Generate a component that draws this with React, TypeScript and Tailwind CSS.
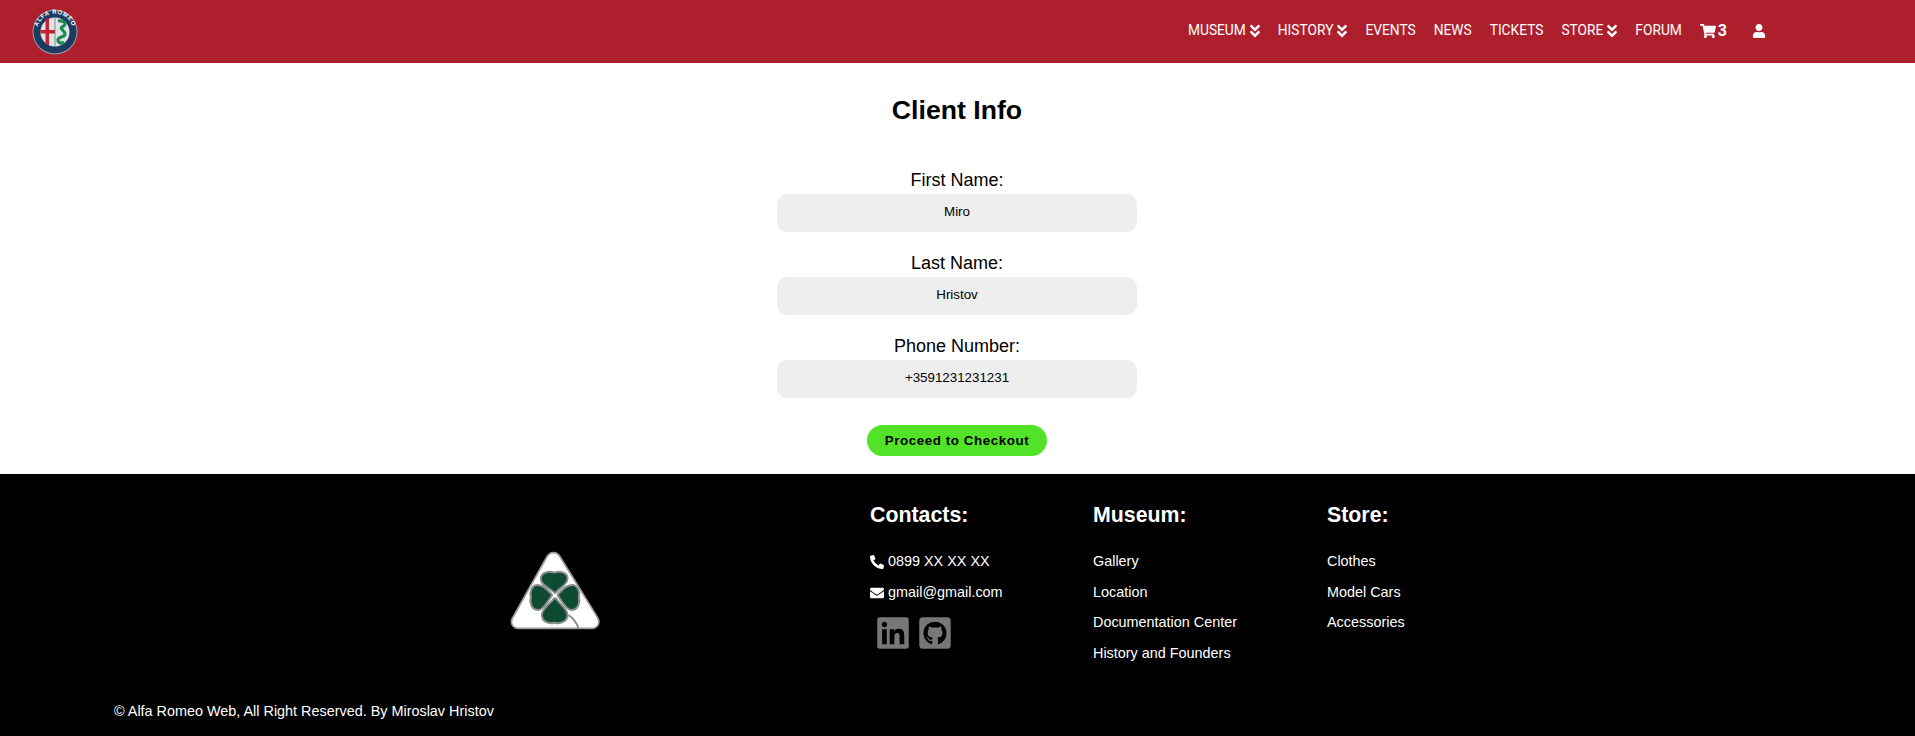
import { FaAngleDoubleDown, FaShoppingCart, FaUser, FaPhoneAlt, FaEnvelope, FaLinkedin, FaGithubSquare } from "react-icons/fa";

const Arial = "font-['Liberation_Sans',Arial,sans-serif]";

const navItems = [
  { label: "MUSEUM", arrow: true },
  { label: "HISTORY", arrow: true },
  { label: "EVENTS" },
  { label: "NEWS" },
  { label: "TICKETS" },
  { label: "STORE", arrow: true },
  { label: "FORUM" },
];

const fields = [
  { label: "First Name:", value: "Miro" },
  { label: "Last Name:", value: "Hristov" },
  { label: "Phone Number:", value: "+3591231231231" },
];

const museumLinks = ["Gallery", "Location", "Documentation Center", "History and Founders"];
const storeLinks = ["Clothes", "Model Cars", "Accessories"];

const AlfaLogo = () => (
  <svg viewBox="0 0 46 46" className="w-[46px] h-[46px]">
    <defs>
      <path id="ring" d="M5.5 27 A18 18 0 1 1 40.5 27" />
    </defs>
    <circle cx="23" cy="23" r="22.5" fill="#9aa5b1" />
    <circle cx="23" cy="23" r="21.5" fill="#1d3a5f" />
    <text fill="#fff" fontSize="6" fontWeight="700" letterSpacing="0.6" fontFamily="Liberation Sans, sans-serif">
      <textPath href="#ring" startOffset="50%" textAnchor="middle">
        ALFA ROMEO
      </textPath>
    </text>
    <circle cx="23" cy="23" r="14.5" fill="#dfe3e6" />
    <path d="M8.5 21 H23 V24.5 H8.5 Z" fill="#c8202f" />
    <path d="M13.5 10 L17 9 V36 L13.5 35 Z" fill="#c8202f" />
    <path d="M26 12 C33 11 35 15 31 17.5 C26 20 33 21 33 25 C33 29 26 27 26 31 C26 34 30 35 32 33" fill="none" stroke="#1f8a4c" strokeWidth="3.2" />
    <path d="M23 8.5V37.5" stroke="#5b6670" strokeWidth="0.7" />
  </svg>
);

const Clover = () => (
  <svg viewBox="60 60 275 240" className="w-[92px] h-[80px]">
    <path d="M190 68 C200 68 207 74 212 84 L322 262 C332 280 322 295 305 295 L85 295 C68 295 58 280 68 262 L168 84 C173 74 180 68 190 68 Z" fill="#fff" stroke="#9a9a9a" strokeWidth="5" />
    <g fill="#0f4a33" stroke="#8a8f8c" strokeWidth="6">
      <path d="M193 188 C180 175 150 165 152 145 C153 128 175 122 192 128 C210 122 232 128 232 145 C233 165 205 175 197 188 Z" />
      <path d="M185 193 C172 180 160 165 142 165 C125 165 118 185 122 202 C118 220 125 240 145 240 C160 240 175 210 185 197 Z" />
      <path d="M203 193 C216 180 228 165 246 165 C263 165 270 185 266 202 C270 220 263 240 243 240 C228 240 213 210 203 197 Z" />
      <path d="M192 205 C182 220 155 235 155 255 C155 275 175 283 192 278 C210 283 232 275 232 255 C232 235 205 220 197 205 Z" />
    </g>
    <path d="M235 255 C250 265 260 280 265 295" fill="none" stroke="#8a8f8c" strokeWidth="6" />
  </svg>
);

export default function App() {
  return (
    <div className={`${Arial} w-full min-h-[736px] bg-white flex flex-col`}>
      <nav className="h-[63px] bg-[#ae1f2e] flex items-center pl-[32px] pr-[149px] justify-between text-white">
        <AlfaLogo />
        <ul className="flex items-center gap-[18px] pb-[2px] font-['Roboto',sans-serif] text-[13.75px]">
          {navItems.map((item) => (
            <li key={item.label} className="flex items-center gap-[1px]">
              {item.label}
              {item.arrow && <FaAngleDoubleDown className="text-[16px] -mr-[3px]" />}
            </li>
          ))}
          <li className="flex items-center gap-[2px] font-bold text-[16px]">
            <FaShoppingCart className="text-[16px]" />3
          </li>
          <li className="ml-[7px]">
            <FaUser className="text-[14px]" />
          </li>
        </ul>
      </nav>

      <main className="h-[411px] flex flex-col items-center pr-[1px]">
        <h2 className="text-[26.67px] font-bold leading-[32px] mt-[31px] mb-[44px]">Client Info</h2>
        {fields.map((field) => (
          <div key={field.label} className="flex flex-col items-center mb-[21px]">
            <label className="text-[18px] leading-[21px] mb-[3px]">{field.label}</label>
            <div className="w-[360px] h-[38px] rounded-[10px] bg-[#eeeeee] flex items-center justify-center pb-[2px] text-[13.33px]">
              {field.value}
            </div>
          </div>
        ))}
        <button className="mt-[6px] w-[180px] h-[31px] rounded-full bg-[#52e329] text-[13.33px] font-bold tracking-[0.6px] text-black">
          Proceed to Checkout
        </button>
      </main>

      <footer className="h-[262px] bg-black text-white flex flex-col">
        <div className="flex h-[226px]">
          <div className="w-[870px] shrink-0 flex justify-end pr-[268px] pt-[76px]">
            <Clover />
          </div>
          <div className="w-[223px] shrink-0 pt-[29px]">
            <h3 className="text-[21.33px] font-bold leading-[25px] mb-[25px]">Contacts:</h3>
            <p className="flex items-center gap-[4px] text-[14.4px] leading-[17px] mb-[14px]">
              <FaPhoneAlt className="text-[14px]" /> 0899 XX XX XX
            </p>
            <p className="flex items-center gap-[4px] text-[14.4px] leading-[17px] mb-[14px]">
              <FaEnvelope className="text-[14px]" /> gmail@gmail.com
            </p>
            <div className="flex gap-[6px] pl-[5px] text-[#777777]">
              <FaLinkedin className="text-[36px]" />
              <FaGithubSquare className="text-[36px]" />
            </div>
          </div>
          <div className="w-[234px] shrink-0 pt-[29px]">
            <h3 className="text-[21.33px] font-bold leading-[25px] mb-[25px]">Museum:</h3>
            <ul className="flex flex-col gap-[13.67px] text-[14.4px] leading-[17px]">
              {museumLinks.map((link) => (
                <li key={link}>{link}</li>
              ))}
            </ul>
          </div>
          <div className="pt-[29px]">
            <h3 className="text-[21.33px] font-bold leading-[25px] mb-[25px]">Store:</h3>
            <ul className="flex flex-col gap-[13.67px] text-[14.4px] leading-[17px]">
              {storeLinks.map((link) => (
                <li key={link}>{link}</li>
              ))}
            </ul>
          </div>
        </div>
        <p className="pl-[114px] pt-[3px] text-[14.4px] leading-[17px]">© Alfa Romeo Web, All Right Reserved. By Miroslav Hristov</p>
      </footer>
    </div>
  );
}
